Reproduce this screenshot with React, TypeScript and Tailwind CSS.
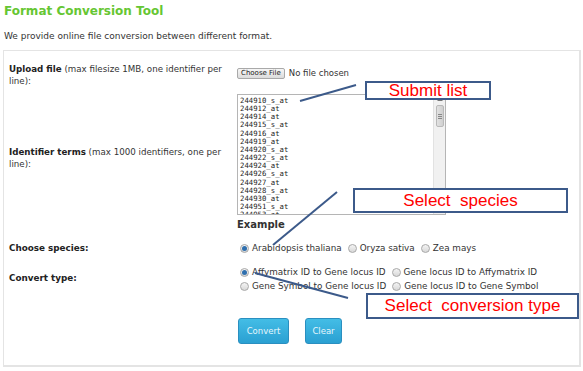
import React from 'react';

const ids = [
    '244910_s_at', '244912_at', '244914_at', '244915_s_at', '244916_at', '244919_at', '244920_s_at',
    '244922_s_at', '244924_at', '244926_s_at', '244927_at', '244928_s_at', '244930_at', '244951_s_at', '244953_at',
];

const Radio = ({ checked }: { checked?: boolean }) => (
    <span className="inline-flex items-center justify-center w-[9px] h-[9px] rounded-full border border-[#a8a8a8] bg-gradient-to-b from-[#f4f4f4] to-[#d8d8d8] mr-[3px] shrink-0">
        {checked && <span className="w-[5px] h-[5px] rounded-full bg-[#2f6fae]" />}
    </span>
);

const Option = ({ label, checked }: { label: string; checked?: boolean }) => (
    <label className="inline-flex items-center mr-[6px]">
        <Radio checked={checked} />
        {label}
    </label>
);

const Note = ({ text, className }: { text: string; className: string }) => (
    <div className={`absolute flex items-center justify-center bg-white border-2 border-[#3c5a8a] text-[#ff0000] text-[17px] whitespace-pre font-['Liberation_Sans',Arial,sans-serif] ${className}`}>
        {text}
    </div>
);

const App: React.FC = () => {
    return (
        <div className="relative w-[583px] h-[371px] bg-white overflow-hidden text-[9px] text-[#333] font-['DejaVu_Sans',Verdana,sans-serif]">
            <h1 className="pl-[4px] pt-[3px] text-[12px] leading-[16px] font-bold text-[#66c633]">Format Conversion Tool</h1>
            <p className="pl-[4px] mt-[12px] leading-[10px]">We provide online file conversion between different format.</p>

            <div className="ml-[3px] mr-[2px] mt-[9px] h-[317px] border border-[#e4e4e4] border-r-2 border-b-2 pt-[12px] pl-[5px]">
                {/* upload */}
                <div className="flex">
                    <div className="w-[228px] leading-[12px] text-[8.7px]">
                        <div className="w-[226px]">
                            <b className="text-[#222]">Upload file</b> (max filesize 1MB, one identifier per line):
                        </div>
                    </div>
                    <div className="flex items-start pt-[5px]">
                        <button className="h-[11px] px-[3px] border border-[#a9a9a9] rounded-[2px] bg-gradient-to-b from-[#f6f6f6] to-[#dcdcdc] text-[7px] leading-[9px] text-[#222]">Choose File</button>
                        <span className="ml-[4px] leading-[11px] text-[8.5px]">No file chosen</span>
                    </div>
                </div>

                {/* identifiers */}
                <div className="flex">
                    <div className="w-[228px] leading-[12px] pt-[59px] text-[8.7px]">
                        <div className="w-[226px]">
                            <b className="text-[#222]">Identifier terms</b> (max 1000 identifiers, one per line):
                        </div>
                    </div>
                    <div className="pt-[7px]">
                        <div className="flex w-[209px] h-[121px] border border-[#b5b5b5] bg-white overflow-hidden">
                            <div className="flex-1 pl-[2px] pt-[2px] font-['DejaVu_Sans_Mono',monospace] text-[7.3px] leading-[8.15px] text-[#222]">
                                {ids.map((id) => (
                                    <div key={id}>{id}</div>
                                ))}
                            </div>
                            <div className="w-[12px] flex flex-col items-center bg-[#f1f1f1] border-l border-[#e2e2e2]">
                                <div className="mt-[3px] w-0 h-0 border-x-[3px] border-x-transparent border-b-[3px] border-b-[#777]" />
                                <div className="w-[8px] h-[22px] mt-[4px] rounded-[2px] border border-[#b9b9b9] bg-gradient-to-r from-[#e2e2e2] to-[#cfcfcf] flex flex-col items-center justify-center gap-[1px]">
                                    <span className="w-[4px] h-px bg-[#888]" />
                                    <span className="w-[4px] h-px bg-[#888]" />
                                    <span className="w-[4px] h-px bg-[#888]" />
                                </div>
                                <div className="flex-1" />
                                <div className="mb-[3px] w-0 h-0 border-x-[3px] border-x-transparent border-t-[3px] border-t-[#777]" />
                            </div>
                        </div>
                        <div className="mt-[4px] text-[10px] leading-[12px] font-bold text-[#333]">Example</div>
                    </div>
                </div>

                {/* species */}
                <div className="flex pt-[11px] leading-[12px]">
                    <div className="w-[228px] font-bold text-[#222] text-[8.8px]">Choose species:</div>
                    <div className="flex items-center pl-[3px] text-[8.8px]">
                        <Option label="Arabidopsis thaliana" checked />
                        <Option label="Oryza sativa" />
                        <Option label="Zea mays" />
                    </div>
                </div>

                {/* convert type */}
                <div className="flex pt-[11px]">
                    <div className="w-[228px] flex items-center font-bold text-[#222] text-[8.8px]">Convert type:</div>
                    <div className="pl-[3px] leading-[14px] text-[8.8px]">
                        <div className="flex items-center">
                            <Option label="Affymatrix ID to Gene locus ID" checked />
                            <Option label="Gene locus ID to Affymatrix ID" />
                        </div>
                        <div className="flex items-center">
                            <Option label="Gene Symbol to Gene locus ID" />
                            <Option label="Gene locus ID to Gene Symbol" />
                        </div>
                    </div>
                </div>

                {/* actions */}
                <div className="flex gap-[16px] pt-[25px] pl-[229px]">
                    <button className="w-[51px] h-[26px] rounded-[3px] border border-[#2a8fc0] bg-gradient-to-b from-[#43bde6] to-[#2aa0d2] text-[#e6f6fc] text-[8.5px]">Convert</button>
                    <button className="w-[37px] h-[26px] rounded-[3px] border border-[#2a8fc0] bg-gradient-to-b from-[#43bde6] to-[#2aa0d2] text-[#e6f6fc] text-[8.5px]">Clear</button>
                </div>
            </div>

            <svg className="absolute left-0 top-0" width="583" height="371">
                <line x1="300" y1="101" x2="356" y2="85" stroke="#3c5a8a" strokeWidth="2" />
                <line x1="337" y1="192" x2="273" y2="245" stroke="#3c5a8a" strokeWidth="2" />
                <line x1="255" y1="273" x2="348" y2="298" stroke="#3c5a8a" strokeWidth="2" />
            </svg>
            <Note text="Submit list" className="left-[365px] top-[81px] w-[126px] h-[19px]" />
            <Note text="Select  species" className="left-[353px] top-[188px] w-[215px] h-[25px]" />
            <Note text="Select  conversion type" className="left-[366px] top-[293px] w-[213px] h-[26px]" />
        </div>
    );
};

export default App;
